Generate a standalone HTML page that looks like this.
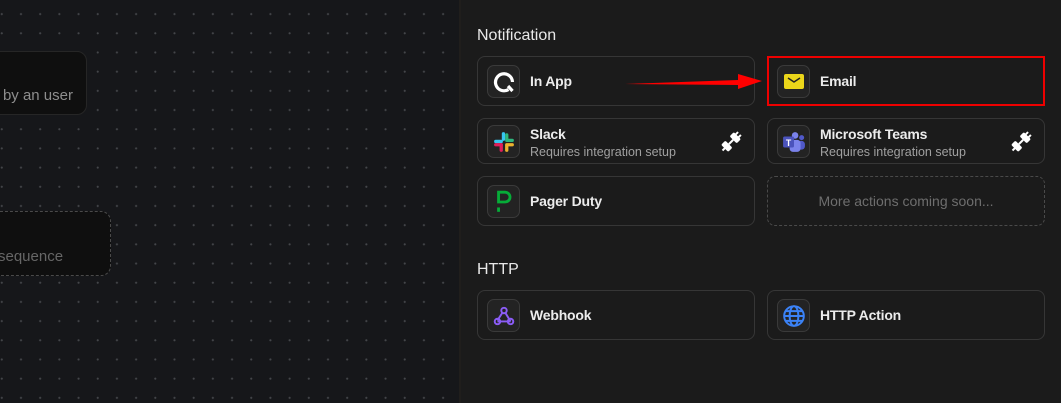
<!DOCTYPE html>
<html><head><style>
*{box-sizing:border-box;margin:0;padding:0}
body{width:1061px;height:403px;overflow:hidden;background:#1b1b1b;font-family:"Liberation Sans",sans-serif;position:relative}
.canvas{position:absolute;left:0;top:0;width:461px;height:403px;background-color:#16171a;background-image:radial-gradient(circle,#44464a 0.9px,transparent 1.2px);background-size:19.2px 19.2px;background-position:-7.8px 4.5px;border-right:2px solid #201e1c}
.lc{position:absolute;border-radius:10px;background:#0f0f0f;border:1px solid #262626;color:#8e8e8e;font-size:15px}
.h{position:absolute;left:477px;color:#e8e8e8;font-size:16px}
.card{position:absolute;width:278px;border:1px solid #363636;border-radius:8px;background:#1b1b1b}
.ic{position:absolute;left:9px;width:33px;height:33px;border-radius:7px;background:#232323;border:1px solid #3a3a3a;display:flex;align-items:center;justify-content:center}
.t{position:absolute;left:52px;color:#ececec;font-size:14px;font-weight:bold;letter-spacing:-0.2px}
.s{position:absolute;left:52px;color:#a0a0a0;font-size:12.5px}
.plug{position:absolute;right:12px;top:12px}
</style></head><body>
<div class="canvas">
<div class="lc" style="left:-20px;top:51px;width:107px;height:64px"><span style="position:absolute;right:13px;top:35px">y by an user</span></div>
<div class="lc" style="left:-20px;top:211px;width:131px;height:65px;border:1px dashed #4a4a4a"><span style="position:absolute;left:17px;top:36px;color:#666">sequence</span></div>
</div>
<div class="h" style="top:27px">Notification</div>
<div class="h" style="top:261px">HTTP</div>

<div class="card" style="left:477px;top:56px;height:50px"><div class="ic" style="top:8px"><svg width="24" height="24" viewBox="0 0 24 24"><path d="M16.5 19.5A8.5 8.5 0 1 1 20.5 12" fill="none" stroke="#fff" stroke-width="3.2"/><path d="M16 16l4.5 5" stroke="#fff" stroke-width="3.2"/></svg></div><div class="t" style="top:16px">In App</div></div>
<div class="card" style="left:767px;top:56px;height:50px;border:2px solid #e00;border-radius:0"><div class="ic" style="top:7px;left:8px"><svg width="20" height="16" viewBox="0 0 20 16"><rect width="20" height="15" rx="2" fill="#ebd61a"/><path d="M4 4l6 4 6-4" fill="none" stroke="#222" stroke-width="1.5"/></svg></div><div class="t" style="top:15px;left:51px">Email</div></div>
<svg style="position:absolute;left:620px;top:72px" width="145" height="20"><polygon points="5,12 118,8 118,2 142,9 118,17 118,13" fill="#f00"/></svg>

<div class="card" style="left:477px;top:118px;height:46px"><div class="ic" style="top:6px"><svg width="22" height="22" viewBox="0 0 20 20"><rect x="8" y="1" width="3" height="8" rx="1.5" fill="#36c5f0"/><rect x="1" y="8" width="8" height="3" rx="1.5" fill="#36c5f0"/><rect x="11" y="2" width="3" height="7" rx="1.5" fill="#2eb67d"/><rect x="11" y="7" width="8" height="3" rx="1.5" fill="#2eb67d"/><rect x="1" y="11" width="8" height="3" rx="1.5" fill="#e01e5a"/><rect x="6" y="11" width="3" height="8" rx="1.5" fill="#e01e5a"/><rect x="11" y="11" width="8" height="3" rx="1.5" fill="#ecb22e"/><rect x="11" y="12" width="3" height="7" rx="1.5" fill="#ecb22e"/></svg></div><div class="t" style="top:7px">Slack</div><div class="s" style="top:26px">Requires integration setup</div><svg class="plug" width="22" height="22" viewBox="0 0 22 22"><g fill="#fff" transform="rotate(45 11 11)"><rect x="6" y="2" width="10" height="6" rx="1.5"/><rect x="8" y="-1" width="2" height="4"/><rect x="12" y="-1" width="2" height="4"/><rect x="6" y="14" width="10" height="6" rx="1.5"/><rect x="10" y="8" width="2" height="6"/><rect x="10" y="19" width="2" height="4"/></g></svg></div>
<div class="card" style="left:767px;top:118px;height:46px"><div class="ic" style="top:6px"><svg width="24" height="22" viewBox="0 0 22 20"><circle cx="12" cy="4" r="3" fill="#7b83eb"/><circle cx="18" cy="6" r="2.3" fill="#5059c9"/><rect x="14" y="9" width="7" height="8" rx="3" fill="#5059c9"/><rect x="7" y="8" width="10" height="11" rx="3" fill="#7b83eb"/><rect x="1" y="5" width="10" height="10" rx="1.5" fill="#4b53bc"/><text x="6" y="13.5" font-size="8" fill="#fff" text-anchor="middle" font-family="Liberation Sans" font-weight="bold">T</text></svg></div><div class="t" style="top:7px">Microsoft Teams</div><div class="s" style="top:26px">Requires integration setup</div><svg class="plug" width="22" height="22" viewBox="0 0 22 22"><g fill="#fff" transform="rotate(45 11 11)"><rect x="6" y="2" width="10" height="6" rx="1.5"/><rect x="8" y="-1" width="2" height="4"/><rect x="12" y="-1" width="2" height="4"/><rect x="6" y="14" width="10" height="6" rx="1.5"/><rect x="10" y="8" width="2" height="6"/><rect x="10" y="19" width="2" height="4"/></g></svg></div>

<div class="card" style="left:477px;top:176px;height:50px"><div class="ic" style="top:8px"><svg width="18" height="24" viewBox="0 0 16 22"><path d="M3 2h6a4.5 4.5 0 0 1 0 9H3z" fill="none" stroke="#06ac38" stroke-width="2.6"/><rect x="1.7" y="16" width="2.6" height="4" fill="#06ac38"/></svg></div><div class="t" style="top:16px">Pager Duty</div></div>
<div class="card" style="left:767px;top:176px;height:50px;border:1px dashed #4a4a4a"><div style="position:absolute;left:0;right:0;top:16px;text-align:center;color:#6e6e6e;font-size:14px">More actions coming soon...</div></div>

<div class="card" style="left:477px;top:290px;height:50px"><div class="ic" style="top:8px"><svg width="24" height="24" viewBox="0 0 22 22" fill="none" stroke="#8b5cf6" stroke-width="1.8"><circle cx="11" cy="6" r="2.5"/><circle cx="5" cy="16" r="2.5"/><circle cx="17" cy="16" r="2.5"/><path d="M9.5 8L5 15M13 16h4M12.5 8.5l4.5 7.5M5 16h8"/></svg></div><div class="t" style="top:16px">Webhook</div></div>
<div class="card" style="left:767px;top:290px;height:50px"><div class="ic" style="top:8px"><svg width="24" height="24" viewBox="0 0 22 22" fill="none" stroke="#3b82f6" stroke-width="1.8"><circle cx="11" cy="11" r="9"/><ellipse cx="11" cy="11" rx="4" ry="9"/><path d="M2 11h18M3.5 6.5h15M3.5 15.5h15"/></svg></div><div class="t" style="top:16px">HTTP Action</div></div>
</body></html>
